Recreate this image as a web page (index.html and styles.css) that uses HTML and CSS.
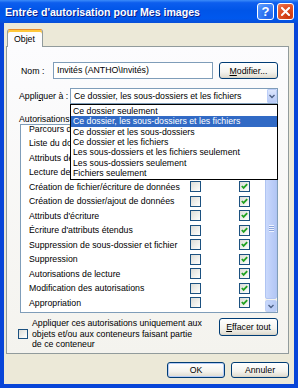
FILE: index.html
```html
<!DOCTYPE html>
<html lang="fr">
<head>
<meta charset="utf-8">
<title>Entrée d'autorisation pour Mes images</title>
<link rel="stylesheet" href="styles.css">
</head>
<body>
<div class="window">
  <div class="titlebar">
    <span class="title">Entrée d'autorisation pour Mes images</span>
    <div class="tb-buttons">
      <span class="tb-btn help">?</span>
      <span class="tb-btn close"><svg width="9" height="9" viewBox="0 0 9 9"><path d="M1 1 L8 8 M8 1 L1 8" stroke="#fff" stroke-width="2" stroke-linecap="square"/></svg></span>
    </div>
  </div>
  <div class="client">
    <div class="tabs"><div class="tab">Objet</div></div>
    <div class="panel">
      <div class="row-nom">
        <span class="lbl-nom">Nom :</span>
        <div class="input">Invités (ANTHO\Invités)</div>
        <span class="btn btn-mod"><u>M</u>odifier...</span>
      </div>
      <div class="row-apply">
        <span class="lbl-apply">Appli<u>q</u>uer à :</span>
        <div class="combo">
          <span class="combo-text">Ce dossier, les sous-dossiers et les fichiers</span>
          <span class="combo-arrow"><svg width="6" height="5" viewBox="0 0 6 5"><path d="M0.5 1 L3 3.5 L5.5 1" stroke="#4D6185" stroke-width="1.4" fill="none"/></svg></span>
          <ul class="dropdown">
            <li>Ce dossier seulement</li>
            <li class="sel">Ce dossier, les sous-dossiers et les fichiers</li>
            <li>Ce dossier et les sous-dossiers</li>
            <li>Ce dossier et les fichiers</li>
            <li>Les sous-dossiers et les fichiers seulement</li>
            <li>Les sous-dossiers seulement</li>
            <li>Fichiers seulement</li>
          </ul>
        </div>
      </div>
      <div class="perm-head">Autorisations</div>
      <div class="perm-list">
        <div class="perm-rows">
          <div class="perm"><span class="pl">Parcours du dossier/exécuter le fichier</span><span class="cb"></span><span class="cb on"></span></div>
          <div class="perm"><span class="pl">Liste du dossier/lecture de données</span><span class="cb"></span><span class="cb on"></span></div>
          <div class="perm"><span class="pl">Attributs de lecture</span><span class="cb"></span><span class="cb on"></span></div>
          <div class="perm"><span class="pl">Lecture des attributs étendus</span><span class="cb"></span><span class="cb on"></span></div>
          <div class="perm"><span class="pl">Création de fichier/écriture de données</span><span class="cb"></span><span class="cb on"></span></div>
          <div class="perm"><span class="pl">Création de dossier/ajout de données</span><span class="cb"></span><span class="cb on"></span></div>
          <div class="perm"><span class="pl">Attributs d'écriture</span><span class="cb"></span><span class="cb on"></span></div>
          <div class="perm"><span class="pl">Écriture d'attributs étendus</span><span class="cb"></span><span class="cb on"></span></div>
          <div class="perm"><span class="pl">Suppression de sous-dossier et fichier</span><span class="cb"></span><span class="cb on"></span></div>
          <div class="perm"><span class="pl">Suppression</span><span class="cb"></span><span class="cb on"></span></div>
          <div class="perm"><span class="pl">Autorisations de lecture</span><span class="cb"></span><span class="cb on"></span></div>
          <div class="perm"><span class="pl">Modification des autorisations</span><span class="cb"></span><span class="cb on"></span></div>
          <div class="perm"><span class="pl">Appropriation</span><span class="cb"></span><span class="cb on"></span></div>
        </div>
        <div class="scrollbar">
          <span class="sb-btn"><svg width="6" height="5" viewBox="0 0 6 5"><path d="M0.5 4 L3 1.5 L5.5 4" stroke="#4D6185" stroke-width="1.4" fill="none"/></svg></span>
          <div class="sb-track"><div class="sb-thumb"><span class="grip"></span></div></div>
          <span class="sb-btn"><svg width="6" height="5" viewBox="0 0 6 5"><path d="M0.5 1 L3 3.5 L5.5 1" stroke="#4D6185" stroke-width="1.4" fill="none"/></svg></span>
        </div>
      </div>
      <div class="bottom">
        <div class="chk-apply">
          <span class="cb small"></span>
          <span class="apply-txt">Appliquer ces autorisations uniquement aux objets et/ou aux conteneurs faisant partie de ce conteneur</span>
        </div>
        <span class="btn btn-clear"><u>E</u>ffacer tout</span>
      </div>
    </div>
    <div class="footer">
      <span class="btn btn-ok">OK</span>
      <span class="btn btn-cancel">Annuler</span>
    </div>
  </div>
</div>
</body>
</html>
```

FILE: styles.css
```css
* { box-sizing: border-box; }
html, body { margin: 0; padding: 0; }
body {
  width: 298px;
  height: 388px;
  overflow: hidden;
  font-family: "Liberation Sans", Arial, sans-serif;
  font-size: 8.75px;
  color: #000;
}
u { text-decoration: underline; text-underline-offset: 1px; }

.window {
  width: 298px;
  height: 388px;
  background: #0845D8;
  display: flex;
  flex-direction: column;
}
.titlebar {
  height: 23px;
  flex: none;
  display: flex;
  align-items: center;
  padding: 0 4px 0 5px;
  background: linear-gradient(#3C8CF9 0%, #0D5EEE 12%, #0055E8 45%, #0058EE 80%, #0A4FD6 100%);
}
.title {
  flex: 1;
  color: #fff;
  font-weight: bold;
  font-size: 10.6px;
  white-space: nowrap;
  text-shadow: 1px 1px 0 #0A1E8C;
}
.tb-buttons { display: flex; gap: 3px; }
.tb-btn {
  width: 17px;
  height: 17px;
  border: 1px solid #fff;
  border-radius: 3px;
  display: flex;
  align-items: center;
  justify-content: center;
  color: #fff;
  font-weight: bold;
  font-size: 13px;
  font-family: "Liberation Sans", Arial, sans-serif;
}
.help { background: radial-gradient(circle at 70% 80%, #1D5FE8, #3C82F8 60%, #6FA5FC); }
.close { background: radial-gradient(circle at 70% 80%, #C8350C, #E2542A 60%, #EE8060); }

.client {
  flex: 1;
  margin: 0 4px 4px 4px;
  background: #ECE9D8;
  padding: 6px 5px 0 2px;
  display: flex;
  flex-direction: column;
}
.tabs { height: 17px; display: flex; position: relative; z-index: 2; }
.tab {
  margin-left: 1px;
  width: 36px;
  height: 18px;
  border: 1px solid #919B9C;
  border-bottom: none;
  border-top: 1px solid #E68B2C;
  box-shadow: inset 0 2px 0 #FFC83C;
  border-radius: 3px 3px 0 0;
  background: #FCFCFE;
  padding: 4px 0 0 6px;
  line-height: 10px;
}
.panel {
  height: 308px;
  flex: none;
  border: 1px solid #919B9C;
  background: linear-gradient(#FCFCFE, #F4F3EE);
  padding: 15px 10px 0 12px;
  position: relative;
}

.row-nom { display: flex; align-items: center; height: 17px; }
.lbl-nom { margin-left: 2px; width: 32px; }
.input {
  width: 160px;
  height: 17px;
  border: 1px solid #7F9DB9;
  background: #fff;
  padding-left: 3px;
  line-height: 15px;
  white-space: nowrap;
}
.btn {
  display: flex;
  align-items: center;
  justify-content: center;
  border: 1px solid #003C74;
  border-radius: 3px;
  background: linear-gradient(#FFFFFF 0%, #F4F3EE 60%, #E3E0D5 90%, #D6D0C5 100%);
  white-space: nowrap;
}
.btn-mod { margin-left: 6px; width: 59px; height: 17px; }

.row-apply { display: flex; align-items: center; height: 16px; margin-top: 9px; }
.lbl-apply { width: 51px; }
.combo {
  position: relative;
  width: 208px;
  height: 16px;
  border: 1px solid #7F9DB9;
  background: #fff;
  display: flex;
  align-items: center;
}
.combo-text { flex: 1; padding-left: 3px; white-space: nowrap; }
.combo-arrow {
  width: 10px;
  height: 14px;
  border: 1px solid #BCCEF8;
  border-radius: 1px;
  background: linear-gradient(#DCE6FD, #B7CAF6);
  display: flex;
  align-items: center;
  justify-content: center;
}
.dropdown {
  position: absolute;
  left: -1px;
  top: 15px;
  width: 208px;
  margin: 0;
  padding: 1px 0;
  list-style: none;
  border: 1px solid #000;
  background: #fff;
  z-index: 10;
}
.dropdown li {
  height: 10.33px;
  line-height: 10.33px;
  padding-left: 2px;
  white-space: nowrap;
}
.dropdown li.sel { background: #316AC5; color: #fff; }

.perm-head { margin-top: 10px; height: 10px; line-height: 10px; }
.perm-list {
  margin-left: 1px;
  width: 258px;
  height: 189px;
  border: 1px solid #7F9DB9;
  background: #fff;
  display: flex;
  overflow: hidden;
}
.perm-rows { flex: 1; margin-top: -3.75px; }
.perm {
  height: 14.5px;
  display: flex;
  align-items: center;
  padding: 0 15px 0 8px;
}
.pl { flex: 1; min-width: 0; white-space: nowrap; }
.cb {
  width: 11px;
  height: 11px;
  flex: none;
  border: 1px solid #1C5180;
  background: linear-gradient(135deg, #DCDCD7, #F5F5F2 70%, #FFFFFF);
  display: inline-flex;
  align-items: center;
  justify-content: center;
}
.perm .cb + .cb { margin-left: 38px; }
.cb.on {
  background:
    url("data:image/svg+xml,%3Csvg xmlns='http://www.w3.org/2000/svg' width='9' height='9' viewBox='0 0 9 9'%3E%3Cpath d='M1.8 4 L3.6 5.9 L7.2 2.2' stroke='%2321A121' stroke-width='1.8' fill='none'/%3E%3C/svg%3E") center / 9px 9px no-repeat,
    linear-gradient(135deg, #DCDCD7, #F5F5F2 70%, #FFFFFF);
}
.cb.small { width: 10px; height: 10px; }

.scrollbar {
  width: 12px;
  display: flex;
  flex-direction: column;
  background: #F4F3EE;
}
.sb-btn {
  height: 12px;
  flex: none;
  border: 1px solid #C0D0F4;
  border-radius: 2px;
  background: linear-gradient(90deg, #C8D8FC, #B6C9F4);
  display: flex;
  align-items: center;
  justify-content: center;
}
.sb-track { flex: 1; padding: 20px 0 1px 0; display: flex; }
.sb-thumb {
  flex: 1;
  border: 1px solid #B0C4F2;
  border-radius: 2px;
  background: linear-gradient(90deg, #CAD9FC, #BBCDF8 60%, #B3C7F5);
  display: flex;
  align-items: center;
  justify-content: center;
}
.grip {
  width: 5px;
  height: 7px;
  background: repeating-linear-gradient(#EEF3FE 0 1px, #8CA6DE 1px 2px);
}

.bottom {
  margin-top: 5px;
  display: flex;
  justify-content: space-between;
  align-items: flex-start;
}
.chk-apply { display: flex; align-items: center; margin-left: -1px; }
.apply-txt { margin-left: 4px; width: 172px; line-height: 10.5px; }
.btn-clear { width: 59px; height: 18px; }

.footer {
  margin-top: 8px;
  display: flex;
  justify-content: flex-end;
  gap: 6px;
  padding-right: 0;
}
.btn-ok { width: 58px; height: 16px; box-shadow: inset 0 0 0 1px #B6CCF6; }
.btn-cancel { width: 58px; height: 16px; }
```
